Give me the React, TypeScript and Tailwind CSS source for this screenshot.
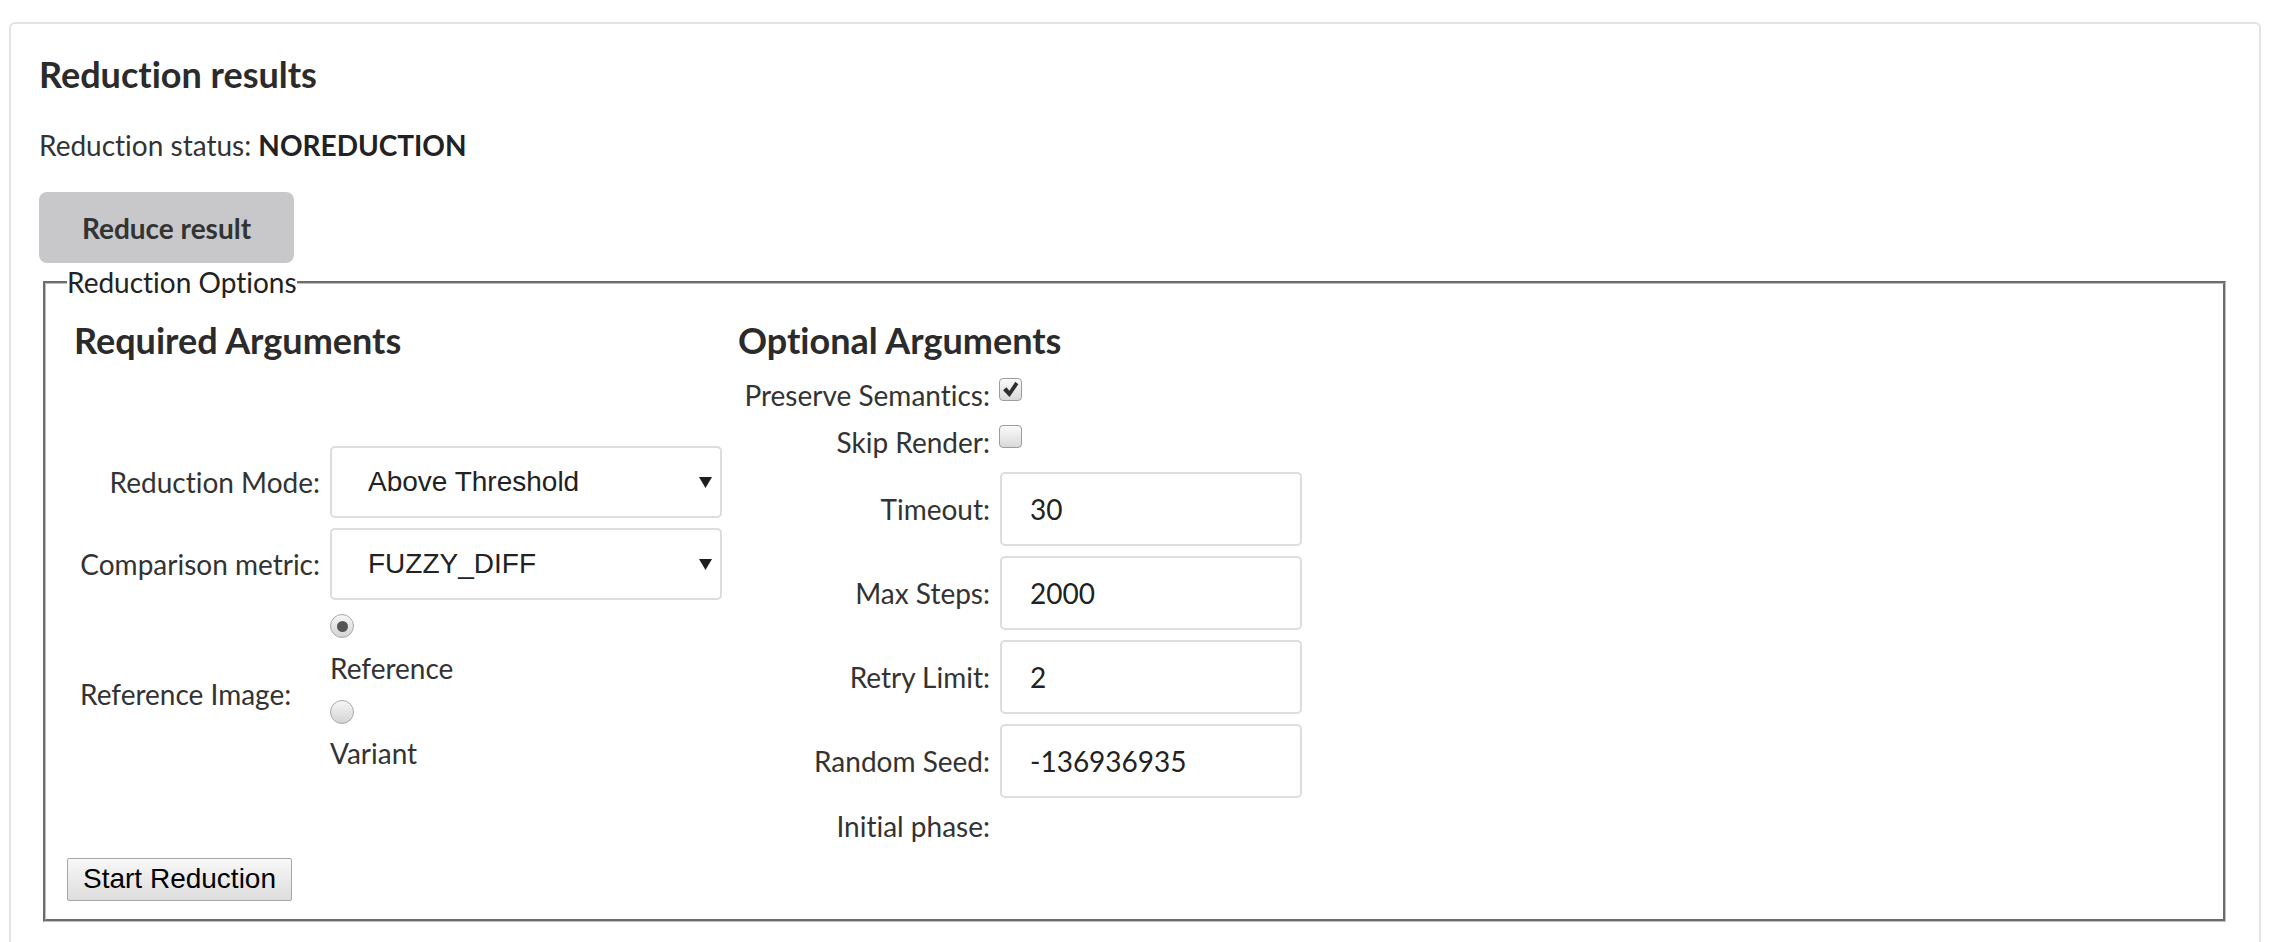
import React from 'react';

const label = "whitespace-nowrap text-[28px] leading-[42px] text-[#333]";

function Caret() {
    return (
        <svg width="13" height="11" viewBox="0 0 13 11" className="shrink-0">
            <path d="M0 0h13L6.5 11z" fill="#1e1e1e" />
        </svg>
    );
}

function SelectBox({ value }: { value: string }) {
    return (
        <div className="flex h-[72px] w-[392px] items-center justify-between rounded-[5px] border-2 border-[#dddddd] bg-white pl-[36px] pr-[8px] font-['Liberation_Sans',Arial,sans-serif] text-[28px] text-[#222]">
            <span>{value}</span>
            <Caret />
        </div>
    );
}

function Checkbox({ checked }: { checked?: boolean }) {
    return (
        <span className="mt-[4px] flex h-[23px] w-[23px] shrink-0 items-center justify-center rounded-[4px] border border-[#9c9c9c] bg-linear-to-b from-[#fbfbfb] to-[#d9d9d9]">
            {checked && (
                <svg width="17" height="17" viewBox="0 0 16 16">
                    <path d="M1 8.6 4.2 5.8l2.7 3.3L12.6.8 15.4 3 7.1 15z" fill="#2f2f2f" />
                </svg>
            )}
        </span>
    );
}

function Radio({ checked }: { checked?: boolean }) {
    return (
        <span className="flex h-[24px] w-[24px] items-center justify-center rounded-full border border-[#a8a8a8] bg-linear-to-b from-[#f6f6f6] to-[#d4d4d4]">
            {checked && <span className="h-[11px] w-[11px] rounded-full bg-[#555]" />}
        </span>
    );
}

function NumberField({ value }: { value: string }) {
    return (
        <input
            readOnly
            defaultValue={value}
            className="h-[74px] w-[302px] rounded-[5px] border-2 border-[#dddddd] bg-white pl-[28px] text-[28px] text-[#222] outline-none"
        />
    );
}

export default function App() {
    const optional = [
        { name: 'Timeout:', value: '30' },
        { name: 'Max Steps:', value: '2000' },
        { name: 'Retry Limit:', value: '2' },
        { name: 'Random Seed:', value: '-136936935' },
    ];

    return (
        <div className="min-h-screen bg-white pl-[9px] pr-[17px] pt-[22px] font-['Lato','Noto_Sans',sans-serif] text-[#333] [font-variant-ligatures:none]">
            <div className="rounded-[6px] border-2 border-[#e3e3e3] px-[28px] pb-[40px] pt-[30px]">
                <h3 className="text-[36px] font-bold leading-[40px] text-[#2b2b2b]">Reduction results</h3>
                <p className={`mt-[30px] ${label}`}>
                    Reduction status: <b className="font-bold text-[#222]">NOREDUCTION</b>
                </p>
                <button className="mt-[26px] flex h-[71px] w-[255px] items-center justify-center rounded-[8px] bg-[#c8c8ca] text-[28px] font-bold text-[#333]">
                    Reduce result
                </button>

                {/* options */}
                <fieldset className="ml-[4px] mr-[5px] mt-[3px] border-[3px] border-[#c0c0c0] pb-[18px] pl-[21px] pr-[21px] pt-[20px] [border-style:groove]">
                    <legend className="text-[28px] leading-[1.2] text-[#222]">Reduction Options</legend>

                    <div className="flex">
                        {/* Required */}
                        <div className="flex w-[664px] flex-col">
                            <h4 className="pl-[7px] text-[36px] font-bold leading-[40px] text-[#2b2b2b]">Required Arguments</h4>
                            <div className="mt-[14px] flex flex-1 flex-col justify-center pl-[13px]">
                                <div className="flex items-center gap-[10px]">
                                    <span className={`w-[240px] text-right ${label}`}>Reduction Mode:</span>
                                    <SelectBox value="Above Threshold" />
                                </div>
                                <div className="mt-[10px] flex items-center gap-[10px]">
                                    <span className={`w-[240px] text-right ${label}`}>Comparison metric:</span>
                                    <SelectBox value="FUZZY_DIFF" />
                                </div>
                                <div className="mt-[14px] flex items-center gap-[10px]">
                                    <span className={`w-[240px] text-left ${label}`}>Reference Image:</span>
                                    <div className="flex flex-col items-start">
                                        <Radio checked />
                                        <span className={`mt-[9px] ${label}`}>Reference</span>
                                        <div className="mt-[11px]">
                                            <Radio />
                                        </div>
                                        <span className={`mt-[8px] ${label}`}>Variant</span>
                                    </div>
                                </div>
                            </div>
                        </div>

                        {/* Optional */}
                        <div className="flex flex-col">
                            <h4 className="pl-[7px] text-[36px] font-bold leading-[40px] text-[#2b2b2b]">Optional Arguments</h4>
                            <div className="mt-[14px] flex flex-col pl-[5px]">
                                <div className="flex h-[47px] items-start gap-[9px]">
                                    <span className={`w-[254px] text-right ${label}`}>Preserve Semantics:</span>
                                    <Checkbox checked />
                                </div>
                                <div className="flex h-[47px] items-start gap-[9px]">
                                    <span className={`w-[254px] text-right ${label}`}>Skip Render:</span>
                                    <Checkbox />
                                </div>
                                <div className="mt-[4px] flex flex-col gap-[10px]">
                                    {optional.map((row) => (
                                        <div key={row.name} className="flex items-center gap-[10px]">
                                            <span className={`w-[254px] text-right ${label}`}>{row.name}</span>
                                            <NumberField value={row.value} />
                                        </div>
                                    ))}
                                </div>
                                <div className="mt-[7px] flex h-[42px] items-start gap-[10px]">
                                    <span className={`w-[254px] text-right ${label}`}>Initial phase:</span>
                                </div>
                            </div>
                        </div>
                    </div>

                    <button className="mt-[11px] flex h-[43px] w-[225px] items-center justify-center rounded-[2px] border border-[#a6a6a6] bg-linear-to-b from-[#f8f8f8] to-[#dddddd] font-['Liberation_Sans',Arial,sans-serif] text-[28px] leading-none text-black">
                        Start Reduction
                    </button>
                </fieldset>
            </div>
        </div>
    );
}
